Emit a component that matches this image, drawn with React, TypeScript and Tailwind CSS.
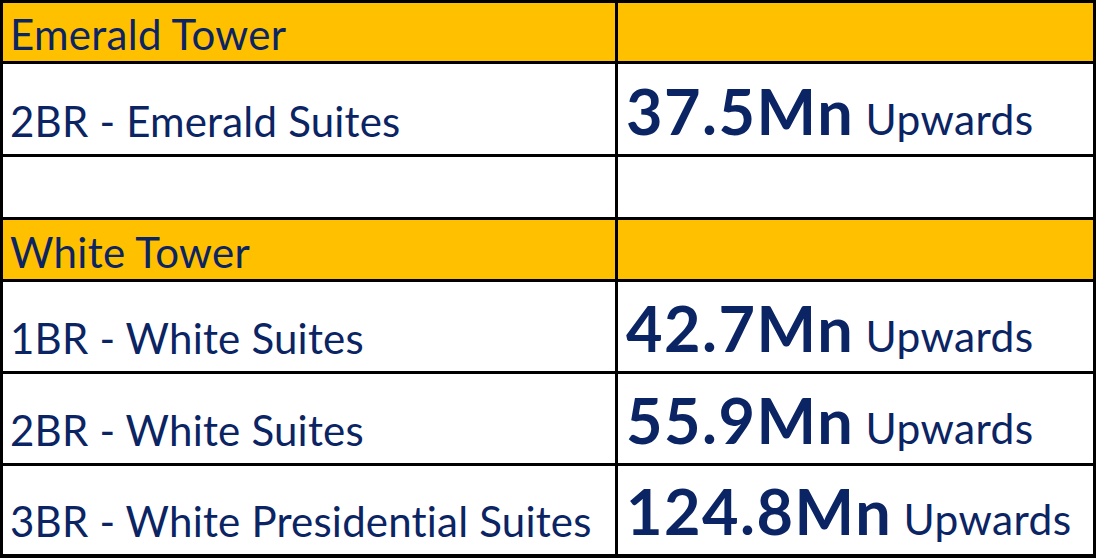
import React from "react";

const font = { fontFamily: "Lato, 'Open Sans', sans-serif" };

type Row = {
  h: string;
  kind: "head" | "item" | "empty";
  label?: string;
  price?: string;
  last?: boolean;
};

const rows: Row[] = [
  { h: "h-[61px]", kind: "head", label: "Emerald Tower" },
  { h: "h-[93px]", kind: "item", label: "2BR - Emerald Suites", price: "37.5Mn" },
  { h: "h-[63px]", kind: "empty" },
  { h: "h-[62px]", kind: "head", label: "White Tower" },
  { h: "h-[92px]", kind: "item", label: "1BR - White Suites", price: "42.7Mn" },
  { h: "h-[92px]", kind: "item", label: "2BR - White Suites", price: "55.9Mn" },
  { h: "h-[88px]", kind: "item", label: "3BR - White Presidential Suites", price: "124.8Mn", last: true },
];

export default function App() {
  return (
    <div
      className="w-[1096px] h-[558px] bg-white border-black border-t-[3px] border-l-[3px] border-r-[3px] border-b-[4px] flex flex-col text-[#0b2463]"
      style={font}
    >
      {rows.map((r, i) => {
        const bg = r.kind === "head" ? "bg-[#ffc000]" : "bg-white";
        return (
          <div
            key={i}
            className={`flex ${r.h} ${r.last ? "" : "border-b-[3px] border-black"} ${bg}`}
          >
            <div className="w-[615px] shrink-0 border-r-[3px] border-black flex items-end pl-[7px]">
              {r.kind === "head" && (
                <span className="text-[42px] tracking-[0.3px] leading-none pb-[6px] whitespace-nowrap">{r.label}</span>
              )}
              {r.kind === "item" && (
                <span className="text-[42px] tracking-[0.2px] leading-none pb-[12px] whitespace-nowrap">{r.label}</span>
              )}
            </div>
            <div className="flex-1 flex items-end pl-[8px]">
              {r.kind === "item" && (
                <div className="text-[63px] leading-none pb-[12px] whitespace-nowrap">
                  <span className="font-bold text-[63px] tracking-[1.5px] leading-none">{r.price}</span>
                  <span className="text-[42.5px] tracking-[0.4px] leading-none"> Upwards</span>
                </div>
              )}
            </div>
          </div>
        );
      })}
    </div>
  );
}
